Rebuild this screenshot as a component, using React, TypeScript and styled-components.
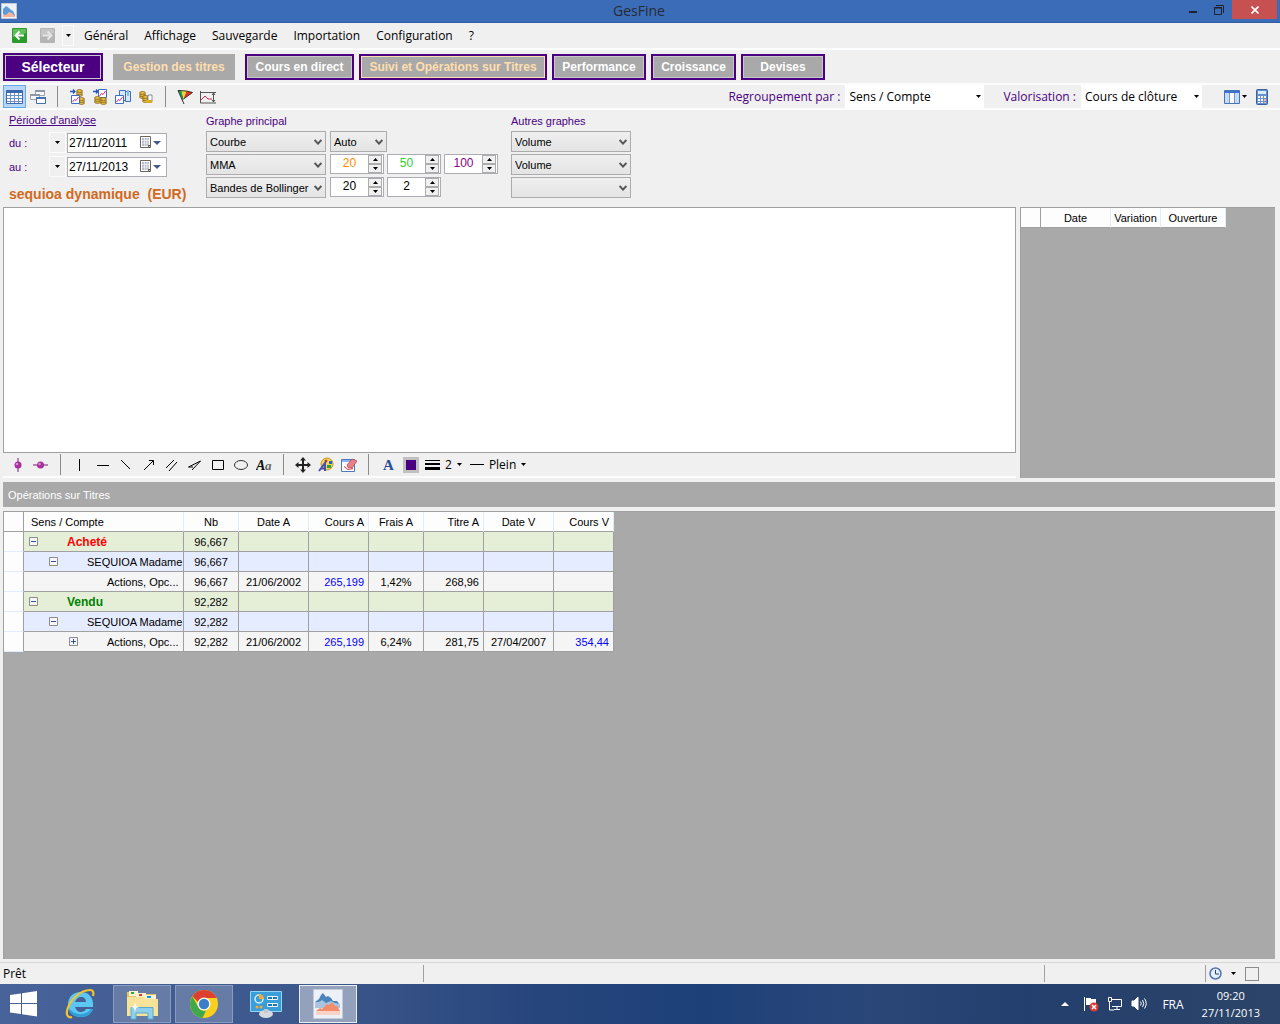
import React from "react";
import styled, { createGlobalStyle, css } from "styled-components";

const ui = `"Open Sans", "Noto Sans", sans-serif`;
const sans = `"Liberation Sans", Arial, sans-serif`;
const indigo = "#4b0082";
const grey = "#a9a9a9";
const line = "#a0a0a0";

const GlobalStyle = createGlobalStyle`
  * { box-sizing: border-box; }
  body { margin: 0; background: #f0f0f0; font: 11px/16px ${sans}; color: #000; }
  button, select, input { font: inherit; color: inherit; margin: 0; border-radius: 0; }
  button { padding: 0; border: 0; background: none; }
  svg { display: block; flex: none; }
`;

const Window = styled.div`
  display: flex;
  flex-direction: column;
  min-height: 100vh;
`;

/* ---------- title bar ---------- */
const TitleBar = styled.header`
  display: grid;
  grid-template-columns: 1fr auto 1fr;
  align-items: center;
  height: 23px;
  padding: 0 3px 0 1px;
  background: #3a6cb8;
  border-bottom: 1px solid #2f5da6;
`;
const WindowTitle = styled.h1`
  margin: 0;
  font: 14px/20px ${ui};
  color: #262a33;
`;
const WindowButtons = styled.div`
  display: flex;
  justify-content: flex-end;
  align-self: start;
`;
const WindowButton = styled.button<{ $close?: boolean }>`
  display: grid;
  place-items: center;
  width: ${p => (p.$close ? 45 : 26)}px;
  height: 19px;
  background: ${p => (p.$close ? "#c75050" : "transparent")};
`;

/* ---------- menus and toolbars ---------- */
const MenuBar = styled.nav`
  display: flex;
  align-items: center;
  height: 27px;
  padding: 0 12px;
  border-bottom: 2px solid #fbfcfe;
  font: 12px/18px ${ui};
`;
const HistoryButtons = styled.div`
  display: flex;
  align-items: center;
  gap: 13px;
  margin-right: 7px;
`;
const DropButton = styled.button<{ $w: number }>`
  display: grid;
  place-items: center;
  width: ${p => p.$w}px;
  height: 21px;
  border: 1px solid #fbfbfb;
`;
const MenuItems = styled.div`
  display: flex;
  gap: 16px;
  margin-left: 10px;
`;
const Tabs = styled.nav`
  display: flex;
  align-items: center;
  gap: 5px;
  height: 35px;
  padding: 0 3px;
  border-bottom: 2px solid #fbfcfe;
`;
const Tab = styled.button<{ $w: number; $kind?: "main" | "flat" | "active" }>`
  width: ${p => p.$w}px;
  height: 26px;
  border: 2px solid ${indigo};
  background: ${grey};
  box-shadow: inset 0 0 0 1px #c8c8c8;
  color: #fff;
  font: bold 12px/16px ${sans};
  white-space: nowrap;
  ${p => p.$kind === "active" && css`
    color: #ffdead;
    box-shadow: inset 0 0 0 1px #ffdead;
  `}
  ${p => p.$kind === "flat" && css`
    margin: 0 5px;
    border-color: ${grey};
    box-shadow: none;
    color: #ffdead;
  `}
  ${p => p.$kind === "main" && css`
    height: 28px;
    background: ${indigo};
    font-size: 14px;
  `}
`;
const ToolBar = styled.div<{ $inset?: number }>`
  display: flex;
  align-items: center;
  height: 25px;
  padding: 0 7px 0 ${p => p.$inset ?? 3}px;
  border-bottom: 2px solid #fbfcfe;
  font: 12px/18px ${ui};
`;
const Tool = styled.button<{ $on?: boolean }>`
  display: grid;
  place-items: center;
  width: 23px;
  height: 23px;
  border: 1px solid ${p => (p.$on ? "#66a7e8" : "transparent")};
  background: ${p => (p.$on ? "#b8d6f5" : "none")};
`;
const WideTool = styled.button<{ $tight?: boolean }>`
  display: flex;
  align-items: center;
  gap: ${p => (p.$tight ? 2 : 5)}px;
  height: 23px;
  padding: 0 ${p => (p.$tight ? 3 : 5)}px 0 3px;
`;
const Divider = styled.i`
  width: 1px;
  height: 21px;
  margin: 0 7px 0 8px;
  background: #8c8c8c;
`;
const ComboGroup = styled.div`
  display: flex;
  align-items: center;
  gap: 19px;
  margin-left: auto;
  margin-right: 19px;
`;
const ComboLabel = styled.label`
  display: flex;
  align-items: center;
  gap: 5px;
  color: ${indigo};
`;

/* ---------- fields ---------- */
const SelectBox = styled.span<{ $w: number }>`
  position: relative;
  display: block;
  width: ${p => p.$w}px;
`;
const BoxSelect = styled.select`
  appearance: none;
  display: block;
  width: 100%;
  height: 21px;
  padding: 0 12px 0 3px;
  border: 1px solid #acacac;
  background: linear-gradient(#efefef, #e4e4e4);
`;
const FlatSelect = styled.select`
  appearance: none;
  display: block;
  width: 100%;
  height: 23px;
  padding: 0 14px 0 4px;
  border: 0;
  background: #fff;
  color: #000;
`;
const SelectMark = styled.span<{ $right: number }>`
  position: absolute;
  top: 0;
  bottom: 0;
  right: ${p => p.$right}px;
  display: flex;
  align-items: center;
  pointer-events: none;
`;
const Spinner = styled.div`
  display: flex;
  width: 54px;
  height: 20px;
  border: 1px solid #abadb3;
  background: #fff;
`;
const SpinInput = styled.input<{ $color: string }>`
  flex: 1;
  min-width: 0;
  padding: 0 0 2px;
  border: 0;
  background: none;
  text-align: center;
  font-size: 12px;
  color: ${p => p.$color};
`;
const SpinButtons = styled.div`
  display: grid;
  grid-template-rows: 1fr 1fr;
  width: 15px;
  padding-right: 1px;
`;
const SpinButton = styled.button`
  display: grid;
  place-items: center;
  border: 1px solid #acacac;
  background: #f0f0f0;
`;

/* ---------- parameters ---------- */
const Parameters = styled.section`
  display: grid;
  grid-template-columns: 197px 305px auto;
  justify-content: start;
  height: 97px;
  padding: 3px 0 0 9px;
  color: ${indigo};
`;
const ParamColumn = styled.div`
  display: flex;
  flex-direction: column;
  gap: 2px;
`;
const DateColumn = styled.div`
  display: flex;
  flex-direction: column;
  gap: 4px;
`;
const GroupTitle = styled.div`
  height: 16px;
`;
const PeriodLink = styled.a`
  line-height: 15px;
  color: ${indigo};
  text-decoration: underline;
`;
const FieldRow = styled.div`
  display: flex;
  align-items: flex-start;
  gap: 4px;
  color: #000;
`;
const SpinGroup = styled.div`
  display: flex;
  gap: 3px;
`;
const DateRow = styled.div`
  display: grid;
  grid-template-columns: 40px 17px 101px;
  align-items: center;
  height: 20px;
`;
const DateField = styled.div`
  display: flex;
  align-items: center;
  height: 20px;
  margin-left: 1px;
  padding-right: 5px;
  border: 1px solid #abadb3;
  background: #fff;
  color: #000;
`;
const DateInput = styled.input`
  flex: 1;
  min-width: 0;
  padding: 0 0 0 1px;
  border: 0;
  background: none;
  font-size: 12px;
`;
const CalendarButton = styled.button`
  display: flex;
  align-items: center;
  gap: 1px;
`;
const Security = styled.h2`
  margin: 6px 0 0;
  font: bold 14px/16px ${sans};
  color: #d2691e;
  white-space: pre;
`;

/* ---------- chart area ---------- */
const ChartArea = styled.main`
  display: flex;
  gap: 4px;
  padding: 0 5px 0 3px;
`;
const ChartColumn = styled.div`
  flex: 1;
  min-width: 0;
`;
const Chart = styled.div`
  height: 246px;
  border: 1px solid ${line};
  background: #fff;
`;
const QuotePanel = styled.aside`
  width: 255px;
  background: ${grey};
  border: solid ${line};
  border-width: 1px 0 0 1px;
`;
const Swatch = styled.span`
  width: 16px;
  height: 16px;
  border: 3px solid #c0c0c0;
  background: ${indigo};
`;

/* ---------- operations ---------- */
const SectionBar = styled.h3`
  height: 25px;
  margin: 4px 5px 4px 3px;
  padding-left: 5px;
  background: ${grey};
  color: #fff;
  font: 11px/26px ${sans};
`;
const GridPanel = styled.section`
  flex: 1;
  margin: 0 5px 3px 3px;
  border: solid ${line};
  border-width: 1px 0 0 1px;
  background: ${grey};
`;
const Table = styled.table`
  table-layout: fixed;
  width: 0;
  border-collapse: separate;
  border-spacing: 0;
`;
type Align = "left" | "center" | "right";
const HeadCell = styled.th<{ $align: Align; $pad?: number }>`
  height: 20px;
  padding: 0 ${p => p.$pad ?? 4}px;
  border-bottom: 1px solid ${line};
  border-right: 1px solid #e3ecfb;
  background: #fdfdfd;
  font-weight: normal;
  text-align: ${p => p.$align};
  white-space: nowrap;
`;
const CornerCell = styled.td<{ $head?: boolean }>`
  height: 20px;
  padding: 0;
  border-bottom: 1px solid ${p => (p.$head ? line : "#e3ecfb")};
  border-right: 1px solid ${line};
  background: #fdfdfd;
`;
const tones = { group: "#e5efd8", account: "#e6ecff", item: "#f5f5f5" };
const Row = styled.tr<{ $tone: keyof typeof tones }>`
  background: ${p => tones[p.$tone]};
`;
const Cell = styled.td<{ $align: Align; $blue?: boolean }>`
  height: 20px;
  padding: 0 4px;
  border-right: 1px solid ${line};
  border-bottom: 1px solid ${line};
  text-align: ${p => p.$align};
  color: ${p => (p.$blue ? "#00f" : "#000")};
  white-space: nowrap;
`;
const TreeCell = styled.td`
  height: 20px;
  padding: 0;
  border-right: 1px solid ${line};
  border-bottom: 1px solid ${line};
`;
const TreeNode = styled.div<{ $level: number; $color?: string }>`
  display: grid;
  grid-template-columns: 9px auto;
  column-gap: 29px;
  justify-content: start;
  align-items: center;
  padding-left: ${p => 5 + p.$level * 20}px;
  color: ${p => p.$color ?? "#000"};
  font-weight: ${p => (p.$color ? "bold" : "normal")};
  font-size: ${p => (p.$color ? 12 : 11)}px;
  white-space: nowrap;
`;

/* ---------- status bar and taskbar ---------- */
const StatusBar = styled.footer`
  display: grid;
  grid-template-columns: 420px 1fr 161px 54px;
  height: 22px;
  padding: 0 21px 0 3px;
  border-top: 1px solid #d7d7d7;
  font: 12px/21px ${ui};
`;
const StatusPane = styled.div`
  display: flex;
  align-items: center;
  height: 17px;
  margin-top: 2px;
  border-left: 1px solid ${line};
`;
const StatusTools = styled(StatusPane)`
  justify-content: space-between;
  padding-left: 3px;
`;
const Square = styled.span`
  width: 14px;
  height: 14px;
  border: 1px solid #8c8c8c;
`;
const TaskBar = styled.footer`
  display: flex;
  align-items: center;
  height: 40px;
  padding-right: 20px;
  background: linear-gradient(90deg, #48639a 0%, #3b5689 26%, #27457d 42%, #1d4079 55%, #2b4779 68%, #233f6d 80%, #2c4468 100%);
  color: #fff;
  font: 11px/17px ${ui};
`;
const TaskButtons = styled.div`
  display: flex;
  gap: 4px;
`;
const TaskButton = styled.button<{ $state?: "start" | "open" | "current" }>`
  display: grid;
  place-items: center;
  width: ${p => (p.$state === "start" ? 47 : 58)}px;
  height: 38px;
  border: 1px solid transparent;
  ${p => p.$state === "open" && css`
    border-color: #8b9bbd;
    background: #667ba6;
  `}
  ${p => p.$state === "current" && css`
    border-color: #e9edf4;
    background: #93a1bd;
  `}
`;
const Tray = styled.div`
  display: flex;
  align-items: center;
  gap: 8px;
  margin-left: auto;
`;
const TrayArrow = styled.button`
  margin-right: 6px;
`;
const Language = styled.span`
  margin: 0 10px 0 7px;
  font-size: 12px;
`;
const Clock = styled.time`
  text-align: center;
`;

/* ---------- drawings ---------- */
const Caret = ({ color = "#000", w = 5 }: { color?: string; w?: number }) => (
  <svg width={w} height={w === 5 ? 3 : 4} viewBox="0 0 8 5" preserveAspectRatio="none" fill={color}><path d="M0 0h8L4 5z" /></svg>
);
const Chevron = () => (
  <svg width="8" height="6" viewBox="0 0 8 6" fill="none" stroke="#555" strokeWidth="2"><path d="M.6 1 4 4.6 7.4 1" /></svg>
);
const Ico = ({ size = 16, children }: { size?: number; children: React.ReactNode }) => (
  <svg width={size} height={size} viewBox="0 0 16 16" fill="none">{children}</svg>
);
const AppLogo = () => (
  <Ico>
    <path fill="#eef2f8" stroke="#c3c9d4" d="M.5.5h15v15H.5z" />
    <path fill="#5b9bdc" d="M2 9V6l3-3 3 2 2 2 2 1 2 4v2H2z" />
    <path fill="#f5b39b" d="m2 11 3 1 3-3 3 1 3 3v1H2z" />
  </Ico>
);
const HistoryArrow = ({ off }: { off?: boolean }) => (
  <svg width="15" height="15" viewBox="0 0 15 15" fill="none">
    <rect width="15" height="15" rx="1" fill={off ? "#b4b4b4" : "#2a9a2c"} />
    <path fill={off ? "#c6c6c6" : "#62bd5d"} d="M1 1h13v4L1 9z" />
    <path stroke={off ? "#e6e6e6" : "#fff"} strokeWidth="1.800" d={off ? "M3 7.500h8.500M7.500 3.500l4 4-4 4" : "M12 7.500H3.500M7.500 3.500l-4 4 4 4"} />
  </svg>
);
const Coins = ({ x, y }: { x: number; y: number }) => (
  <g transform={`translate(${x} ${y})`} stroke="#735109" strokeWidth=".7" fill="#edc348">
    <ellipse cx="3.5" cy="6" rx="3" ry="1.4" /><ellipse cx="3.5" cy="4" rx="3" ry="1.4" /><ellipse cx="3.5" cy="2" rx="3" ry="1.4" />
  </g>
);
const MiniChart = ({ x, y }: { x: number; y: number }) => (
  <g transform={`translate(${x} ${y})`}>
    <path fill="#fff" stroke="#3f6fc4" d="M.5.5h8v8h-8z" /><path stroke="#e0218a" d="m1.500 7 2-2.500 1.500 1 2.500-3.500" />
  </g>
);
const BlueArrow = () => <path stroke="#2458b8" strokeWidth="1.300" d="M1 2.500h5M4 .5l2 2-2 2" />;

const GridIcon = () => (
  <svg width="17" height="16" viewBox="0 0 17 16" fill="none">
    <path fill="#fff" stroke="#3c67ae" d="M.5 1.500h16v13H.5z" /><path fill="#3c67ae" d="M1 2h15v2H1z" />
    <path stroke="#6a8fc8" d="M1 6.500h15M1 9.500h15M1 12.500h15M4.500 4v10M8.500 4v10M12.500 4v10" />
  </svg>
);
const WindowsIcon = () => (
  <Ico>
    <path fill="#f8f8f8" stroke="#9aa2ae" d="M5.500 1.500h9v5h-9z" /><path stroke="#8d97a6" strokeWidth="2" d="M5 2h10" />
    <path fill="#f8f8f8" stroke="#9aa2ae" d="M.5 5.500h9v5h-9z" /><path stroke="#8d97a6" strokeWidth="2" d="M0 6h10" />
    <path fill="#fff" stroke="#476fb4" d="M6.500 8.500h9v6h-9z" /><path stroke="#476fb4" strokeWidth="2" d="M6 9h10" />
  </Ico>
);
const CalculatorIcon = () => (
  <svg width="12" height="16" viewBox="0 0 12 16">
    <rect x=".5" y=".5" width="11" height="15" rx="1" fill="#6791d2" stroke="#3a5fa2" /><path fill="#d8ecff" d="M2 2h8v3H2z" />
    <path fill="#fff" d="M2 7h2v2H2zm3 0h2v2H5zm3 0h2v2H8zM2 10h2v2H2zm3 0h2v2H5z" /><path fill="#f4b6a0" d="M8 10h2v2H8zM8 13h2v1H8z" /><path fill="#fff" d="M2 13h2v1H2zm3 0h2v1H5z" />
  </svg>
);
const ColumnsIcon = () => (
  <svg width="16" height="14" viewBox="0 0 16 14">
    <path fill="#fff" stroke="#4374c2" d="M.5.5h15v13H.5z" /><path fill="#3f72c8" d="M1 1h14v2H1z" />
    <path fill="#c7dbf5" d="M1 3h4v10H1zm10 0h4v10h-4z" /><path stroke="#6f96d2" d="M5.500 3v10M10.500 3v10" />
  </svg>
);
const CalendarIcon = () => (
  <svg width="12" height="13" viewBox="0 0 12 13">
    <path fill="#fff" stroke="#6d6460" d="M.5.5h10v11H.5z" /><path fill="#b6bcc8" d="M2 2h7v8H2z" />
    <path stroke="#fff" strokeWidth=".6" d="M4.500 2v8M6.800 2v8M2 4.500h7M2 7h7" /><path fill="#6d6460" d="M8 12V9h3z" />
  </svg>
);
const topTools: (React.ReactNode | "|")[] = [
  <GridIcon />, <WindowsIcon />, "|",
  <Ico><Coins x={7} y={0} /><Coins x={9} y={8} /><MiniChart x={2} y={6} /><BlueArrow /></Ico>,
  <Ico><MiniChart x={6} y={0} /><Coins x={2} y={7} /><Coins x={8} y={8} /><BlueArrow /></Ico>,
  <Ico><path fill="#d7e8fa" stroke="#3f6fc4" d="M4.500 1.500h6v10h-6zM10.500 2.500h5v10h-5z" /><path fill="#7fbfe0" d="M12 1h2v6h-2z" /><MiniChart x={0} y={6} /></Ico>,
  <Ico><Coins x={1} y={2} /><Coins x={4} y={6} /><path fill="#fff" stroke="#65728c" strokeWidth=".8" d="M10 6h4v7h-4z" /><path fill="#d8a92e" d="M8 11h6v3H8z" /></Ico>, "|",
  <Ico>
    <path fill="#22a045" d="M1 1.500h3.500l2 8L6 12z" /><path fill="#e9dc2c" d="m4.500 1.500 5 .5-3 7.500z" /><path fill="#ed3024" d="m9.500 2 6 1.500L6.500 10z" />
    <path stroke="#222" d="M1 1.500 7 15M1 1.500l8.500.5 6 1.500-9 6.500" strokeWidth=".9" />
  </Ico>,
  <Ico><path stroke="#555" d="M.5 2v12H16M1 3.500h15M13.500 4v9M12 6l1.500-2L15 6M12 11l1.500 2 1.500-2" /><path stroke="#d02848" d="m1 11 4-4 3 3h4" /></Ico>,
];
const drawTools: (React.ReactNode | "|")[] = [
  <Ico><path stroke="#7b1a7b" d="M8 1v14" /><circle cx="8" cy="8" r="3.500" fill="#a8309e" /><circle cx="7" cy="7" r="1.300" fill="#dc8ad6" /></Ico>,
  <Ico><path stroke="#7b1a7b" d="M0 8h15" /><circle cx="7.500" cy="8" r="3.500" fill="#a8309e" /><circle cx="6.500" cy="7" r="1.300" fill="#dc8ad6" /></Ico>,
  "|",
  <Ico><path stroke="#000" d="M7.500 2v12" /></Ico>,
  <Ico><path stroke="#000" d="M2 8.500h12" /></Ico>,
  <Ico><path stroke="#000" d="m3 3 9 9" /></Ico>,
  <Ico><path stroke="#000" d="m3 13 9-9M8 3.500h4.500V8" /></Ico>,
  <Ico><path stroke="#000" d="M2 11 10 3M5 14l8-9" /></Ico>,
  <Ico><path stroke="#000" d="m1.500 10 12-6M5 13 13.500 4M1.500 10h4.500" /></Ico>,
  <Ico><path stroke="#000" d="M2.500 3.500h11v9h-11z" /></Ico>,
  <Ico><ellipse cx="8" cy="8" rx="6.500" ry="4.500" stroke="#333" /></Ico>,
  <Ico>
    <text x="0" y="13" fontFamily="Liberation Serif, serif" fontSize="14" fontWeight="bold" fontStyle="italic" fill="#111">A</text>
    <text x="9" y="13" fontFamily="Liberation Serif, serif" fontSize="13" fontWeight="bold" fontStyle="italic" fill="#666">a</text>
  </Ico>,
  "|",
  <Ico><path stroke="#222" strokeWidth="2" d="M8 2v12M2 8h12" /><path fill="#222" d="m8 0 3 3.500H5zM8 16l3-3.500H5zM0 8l3.500-3v6zM16 8l-3.500-3v6z" /></Ico>,
  <Ico>
    <circle cx="9" cy="7" r="6" fill="#f7d950" stroke="#c2921c" /><circle cx="8" cy="4" r="1.500" fill="#d9322b" /><path fill="#2c62cf" d="M11 4h3v3h-3z" /><path fill="#2c9b3c" d="M9 8h4v3H9z" />
    <path stroke="#4a4fb8" strokeWidth="2" d="m1 14 6-8v8M3 11.500h5" />
  </Ico>,
  <Ico><path fill="#fff" stroke="#4c78bd" d="M.5 2.500h13v12H.5z" /><path fill="#8db2e8" d="M1 3h12v2H1z" /><path fill="#e8808a" stroke="#b53a46" strokeWidth=".7" d="m6 8 5-6 5 2-5 7-4-.5z" /><path stroke="#d33" d="m3 9.500 4 3 5-1" /></Ico>,
  "|",
  <Ico><text x="3" y="13" fontFamily="Liberation Serif, serif" fontSize="15" fontWeight="bold" fill="#2b4c94">A</text></Ico>,
  <Swatch />,
];

const Expander = ({ open }: { open: boolean }) => (
  <svg width="9" height="9" viewBox="0 0 9 9" fill="none">
    <path fill="#f6f6f6" stroke="#8c8c8c" d="M.5.5h8v8h-8z" /><path stroke="#3552a4" d={open ? "M2 4.500h5" : "M2 4.500h5M4.500 2v5"} />
  </svg>
);
const StartIcon = () => (
  <svg width="27" height="26" viewBox="0 0 27 26" fill="#fff"><path d="M0 4 11 2.500V12H0zM12 2.300 27 0v12H12zM0 13h11v10L0 21.500zM12 13h15v12.500l-15-2.300z" /></svg>
);
const BrowserE = () => (
  <svg width="32" height="32" viewBox="0 0 32 32" fill="none">
    <path fill="#5cc7f3" fillRule="evenodd" d="M17 4C9 4 4 9 4 17c0 7 5 12 13 12 6 0 10-3 12-8h-7c-1 2-3 3-5 3-3 0-5-2-6-5h18c1-9-4-15-12-15zm-6 10c1-3 3-5 6-5s5 2 5 5z" />
    <path fill="#2f9fd8" d="M4.500 20c1 6 6 9 12.500 9 6 0 10-3 12-8h-2c-4 6-15 8-22.500-1z" />
    <path stroke="#f5c42d" strokeWidth="2.200" d="M8 29c-3 1-6-1-5-6C5 13 16 2 26 2c3 0 4 2 3 6" />
  </svg>
);
const FolderIcon = () => (
  <svg width="32" height="32" viewBox="0 0 32 32">
    <path fill="#e6c365" d="M1 4h10l1 2h18v22H1z" /><path fill="#fbf3cf" d="M3 3h9v5H3zM10 5h10v5H10zM18 7h12v5H18z" />
    <path fill="#28a745" d="M5 4h3v2H5z" /><path fill="#dc3a2b" d="M13 6h3v2h-3z" /><path fill="#1c90e0" d="M21 8h4v2h-4z" />
    <path fill="#f7e29a" d="M1 9h17l2 2h12v17H1z" /><path fill="#8fd0ec" stroke="#5aa9cf" d="M5 31V19.500h22V31h-5v-6H10v6z" /><path fill="#fff" d="m9 14 1 4 3 1-3 1-1 4-1-4-3-1 3-1z" />
  </svg>
);
const ChromeIcon = () => (
  <svg width="30" height="30" viewBox="0 0 30 30">
    <circle cx="15" cy="15" r="14" fill="#fbcf1d" /><path fill="#dd3f31" d="M15 1a14 14 0 0 1 12.600 8H15a6.500 6.500 0 0 0-6 4L3.400 7.300A14 14 0 0 1 15 1z" />
    <path fill="#3fa84d" d="M3.300 7.500 9 17.500a7 7 0 0 0 8 4L13.500 29A14 14 0 0 1 3.300 7.500z" />
    <circle cx="15" cy="15" r="6.500" fill="#fff" /><circle cx="15" cy="15" r="5.200" fill="#3d7cc9" />
  </svg>
);
const PanelIcon = () => (
  <svg width="32" height="30" viewBox="0 0 32 30">
    <path fill="#3a9fd8" stroke="#8fd6f5" d="M.5 2.500h31v20H.5z" /><circle cx="9" cy="10" r="4" fill="none" stroke="#d4efff" strokeWidth="1.500" /><path fill="#f5a83a" d="M9 10V5a5 5 0 0 1 5 5z" />
    <path fill="#1f76b5" stroke="#eaf7ff" d="M17.500 7.500h10v3h-10zM17.500 14.500h10v3h-10z" /><path fill="#eaf7ff" d="M22 7h1v4h-1zm0 7h1v4h-1z" />
    <circle cx="7" cy="18" r="1.500" fill="#f5a83a" /><circle cx="11" cy="18" r="1.500" fill="#f5a83a" />
    <ellipse cx="16" cy="25" rx="7" ry="4" fill="#d6dade" /><path fill="#c2c8ce" d="M14 20h4v4h-4z" />
  </svg>
);
const MountainIcon = () => (
  <svg width="30" height="30" viewBox="0 0 30 30">
    <path fill="#eef0f7" stroke="#c3cad8" d="M.5.5h29v29H.5z" />
    <path fill="#4a83bd" d="m2 13 4-3 2-4 2-2 3 4 2-1 3 2 2 3 4 0 3 4H2z" /><path fill="#aac4df" d="M2 13h4l3-2 4 3 5-2 4 2 5 1v4H2z" />
    <path fill="#f28d6c" d="m3 22 4-3 2 1 5-5 2 1 3-3 3 4 2 0 3 5z" /><path fill="#f9d3c6" d="M3 22h24v4H3z" />
  </svg>
);
const TrayIcons = () => (
  <>
    <TrayArrow aria-label="Icônes cachées"><svg width="8" height="4" viewBox="0 0 8 4" fill="#fff"><path d="m4 0 4 4H0z" /></svg></TrayArrow>
    <svg width="16" height="16" viewBox="0 0 16 16" fill="none">
      <path stroke="#fff" d="M1.500 1v14" /><path fill="#fff" d="M3 2h5v1h5v7H8V9H3z" /><circle cx="11" cy="11" r="4.500" fill="#d93a35" /><path stroke="#fff" strokeWidth="1.500" d="m9 9 4 4m0-4-4 4" />
    </svg>
    <svg width="16" height="16" viewBox="0 0 16 16" fill="none" stroke="#fff">
      <path d="M5 3.500h9.500v7H5M7 13.500h6M10 10v3M2.500 6v8H7M1.500 1.500h3v4h-3z" />
    </svg>
    <svg width="16" height="16" viewBox="0 0 16 16" fill="none" stroke="#fff">
      <path fill="#fff" d="M1 5h2l4-4v13l-4-4H1z" /><path d="M9.500 5.500q1.500 2 0 4M11.500 4q2.500 3.500 0 7M13.500 2.500q3.500 5 0 10" />
    </svg>
  </>
);

/* ---------- small composites ---------- */
const Tools = ({ items, active }: { items: (React.ReactNode | "|")[]; active?: number }) => (
  <>{items.map((item, i) => (item === "|" ? <Divider key={i} /> : <Tool key={i} $on={i === active}>{item}</Tool>))}</>
);
const Choice = ({ label, value, width = 120 }: { label: string; value: string; width?: number }) => (
  <SelectBox $w={width}>
    <BoxSelect aria-label={label} defaultValue={value}><option>{value}</option></BoxSelect>
    <SelectMark $right={4}><Chevron /></SelectMark>
  </SelectBox>
);
const Combo = ({ label, value, width }: { label: string; value: string; width: number }) => (
  <ComboLabel>
    {label}
    <SelectBox $w={width}>
      <FlatSelect defaultValue={value}><option>{value}</option></FlatSelect>
      <SelectMark $right={3}><Caret /></SelectMark>
    </SelectBox>
  </ComboLabel>
);
const Spin = ({ label, value, color = "#000" }: { label: string; value: string; color?: string }) => (
  <Spinner>
    <SpinInput aria-label={label} defaultValue={value} $color={color} />
    <SpinButtons>
      <SpinButton aria-label="Plus"><svg width="5" height="3" viewBox="0 0 5 3"><path d="M2.500 0 5 3H0z" /></svg></SpinButton>
      <SpinButton aria-label="Moins"><Caret /></SpinButton>
    </SpinButtons>
  </Spinner>
);
const PeriodDate = ({ id, label, value }: { id: string; label: string; value: string }) => (
  <DateRow>
    <label htmlFor={id}>{label}</label>
    <DropButton $w={17} aria-label="Raccourcis"><Caret /></DropButton>
    <DateField>
      <DateInput id={id} defaultValue={value} />
      <CalendarButton aria-label="Calendrier"><CalendarIcon /><Caret color="#44598c" w={8} /></CalendarButton>
    </DateField>
  </DateRow>
);

/* ---------- data ---------- */
const menus = ["Général", "Affichage", "Sauvegarde", "Importation", "Configuration", "?"];
const tabs: { text: string; w: number; kind?: "main" | "flat" | "active" }[] = [
  { text: "Sélecteur", w: 100, kind: "main" },
  { text: "Gestion des titres", w: 122, kind: "flat" },
  { text: "Cours en direct", w: 109 },
  { text: "Suivi et Opérations sur Titres", w: 188, kind: "active" },
  { text: "Performance", w: 94 },
  { text: "Croissance", w: 85 },
  { text: "Devises", w: 84 },
];
const columns: { title: string; w: number; align: Align }[] = [
  { title: "Nb", w: 55, align: "center" },
  { title: "Date A", w: 70, align: "center" },
  { title: "Cours A", w: 60, align: "right" },
  { title: "Frais A", w: 55, align: "center" },
  { title: "Titre A", w: 60, align: "right" },
  { title: "Date V", w: 70, align: "center" },
  { title: "Cours V", w: 60, align: "right" },
];
type Line = { tone: keyof typeof tones; level: number; name: string; color?: string; open?: boolean; cells: string[] };
const lines: Line[] = [
  { tone: "group", level: 0, name: "Acheté", color: "#f00", open: true, cells: ["96,667"] },
  { tone: "account", level: 1, name: "SEQUIOA Madame", open: true, cells: ["96,667"] },
  { tone: "item", level: 2, name: "Actions, Opc...", cells: ["96,667", "21/06/2002", "265,199", "1,42%", "268,96"] },
  { tone: "group", level: 0, name: "Vendu", color: "#008000", open: true, cells: ["92,282"] },
  { tone: "account", level: 1, name: "SEQUIOA Madame", open: true, cells: ["92,282"] },
  { tone: "item", level: 2, name: "Actions, Opc...", open: false, cells: ["92,282", "21/06/2002", "265,199", "6,24%", "281,75", "27/04/2007", "354,44"] },
];

export default function App() {
  return (
    <Window>
      <GlobalStyle />
      <TitleBar>
        <AppLogo />
        <WindowTitle>GesFine</WindowTitle>
        <WindowButtons>
          <WindowButton aria-label="Réduire"><svg width="8" height="8"><path fill="#1d222c" d="M0 5h8v2H0z" /></svg></WindowButton>
          <WindowButton aria-label="Restaurer">
            <svg width="10" height="10" viewBox="0 0 10 10" fill="none" stroke="#1d222c"><path d="M.5 2.500h7v7h-7zM2 .5h7.500V8M0 3h8" /></svg>
          </WindowButton>
          <WindowButton $close aria-label="Fermer">
            <svg width="8" height="8" viewBox="0 0 8 8" stroke="#fff" strokeWidth="1.600"><path d="m.5.5 7 7m0-7-7 7" /></svg>
          </WindowButton>
        </WindowButtons>
      </TitleBar>

      <MenuBar>
        <HistoryButtons>
          <button aria-label="Précédent"><HistoryArrow /></button>
          <button aria-label="Suivant"><HistoryArrow off /></button>
        </HistoryButtons>
        <DropButton $w={12} aria-label="Historique"><Caret /></DropButton>
        <MenuItems>{menus.map(m => <button key={m}>{m}</button>)}</MenuItems>
      </MenuBar>

      <Tabs>{tabs.map(t => <Tab key={t.text} $w={t.w} $kind={t.kind}>{t.text}</Tab>)}</Tabs>

      <ToolBar>
        <Tools items={topTools} active={0} />
        <ComboGroup>
          <Combo label="Regroupement par :" value="Sens / Compte" width={139} />
          <Combo label="Valorisation :" value="Cours de clôture" width={121} />
        </ComboGroup>
        <WideTool $tight aria-label="Colonnes"><ColumnsIcon /><Caret /></WideTool>
        <Tool aria-label="Calculatrice"><CalculatorIcon /></Tool>
      </ToolBar>

      <Parameters>
        <DateColumn>
          <PeriodLink href="#">Période d'analyse</PeriodLink>
          <PeriodDate id="from" label="du :" value="27/11/2011" />
          <PeriodDate id="to" label="au :" value="27/11/2013" />
          <Security>sequioa dynamique  (EUR)</Security>
        </DateColumn>
        <ParamColumn>
          <GroupTitle>Graphe principal</GroupTitle>
          <FieldRow><Choice label="Type" value="Courbe" /><Choice label="Échelle" value="Auto" width={57} /></FieldRow>
          <FieldRow>
            <Choice label="Moyenne" value="MMA" />
            <SpinGroup>
              <Spin label="Moyenne 1" value="20" color="#ff8c00" />
              <Spin label="Moyenne 2" value="50" color="#32cd32" />
              <Spin label="Moyenne 3" value="100" color="#8b008b" />
            </SpinGroup>
          </FieldRow>
          <FieldRow>
            <Choice label="Indicateur" value="Bandes de Bollinger" />
            <SpinGroup><Spin label="Période" value="20" /><Spin label="Écart" value="2" /></SpinGroup>
          </FieldRow>
        </ParamColumn>
        <ParamColumn>
          <GroupTitle>Autres graphes</GroupTitle>
          <FieldRow><Choice label="Graphe 1" value="Volume" /></FieldRow>
          <FieldRow><Choice label="Graphe 2" value="Volume" /></FieldRow>
          <FieldRow><Choice label="Graphe 3" value="" /></FieldRow>
        </ParamColumn>
      </Parameters>

      <ChartArea>
        <ChartColumn>
          <Chart />
          <ToolBar>
            <Tools items={drawTools} />
            <WideTool>
              <svg width="15" height="10"><path d="M0 0h15v1H0zM0 3h15v2H0zM0 7h15v3H0z" /></svg>2<Caret />
            </WideTool>
            <WideTool><svg width="14" height="1"><path d="M0 0h14v1H0z" /></svg>Plein<Caret /></WideTool>
          </ToolBar>
        </ChartColumn>
        <QuotePanel>
          <Table>
            <colgroup><col width={20} /><col width={70} /><col width={50} /><col width={65} /></colgroup>
            <thead>
              <tr>
                <CornerCell $head />
                <HeadCell $align="center">Date</HeadCell>
                <HeadCell $align="center" $pad={0}>Variation</HeadCell>
                <HeadCell $align="center">Ouverture</HeadCell>
              </tr>
            </thead>
          </Table>
        </QuotePanel>
      </ChartArea>

      <SectionBar>Opérations sur Titres</SectionBar>
      <GridPanel>
        <Table>
          <colgroup><col width={20} /><col width={160} />{columns.map(c => <col key={c.title} width={c.w} />)}</colgroup>
          <thead>
            <tr>
              <CornerCell $head />
              <HeadCell $align="left" $pad={7}>Sens / Compte</HeadCell>
              {columns.map(c => <HeadCell key={c.title} $align={c.align}>{c.title}</HeadCell>)}
            </tr>
          </thead>
          <tbody>
            {lines.map((l, i) => (
              <Row key={i} $tone={l.tone}>
                <CornerCell />
                <TreeCell>
                  <TreeNode $level={l.level} $color={l.color}>
                    {l.open === undefined ? <span /> : <Expander open={l.open} />}
                    {l.name}
                  </TreeNode>
                </TreeCell>
                {columns.map((c, n) => (
                  <Cell key={c.title} $align={c.align} $blue={c.title.startsWith("Cours")}>{l.cells[n]}</Cell>
                ))}
              </Row>
            ))}
          </tbody>
        </Table>
      </GridPanel>

      <StatusBar>
        <span>Prêt</span>
        <StatusPane />
        <StatusPane />
        <StatusTools>
          <svg width="13" height="13" viewBox="0 0 13 13" fill="none">
            <circle cx="6.500" cy="6.500" r="5.500" fill="#e6effc" stroke="#5472b0" strokeWidth="1.500" /><path stroke="#2d4377" d="M6.500 3v4H10" />
          </svg>
          <Caret />
          <Square />
        </StatusTools>
      </StatusBar>

      <TaskBar>
        <TaskButtons>
          <TaskButton $state="start" aria-label="Démarrer"><StartIcon /></TaskButton>
          <TaskButton aria-label="Internet"><BrowserE /></TaskButton>
          <TaskButton $state="open" aria-label="Explorateur"><FolderIcon /></TaskButton>
          <TaskButton $state="open" aria-label="Chrome"><ChromeIcon /></TaskButton>
          <TaskButton aria-label="Panneau de configuration"><PanelIcon /></TaskButton>
          <TaskButton $state="current" aria-label="GesFine"><MountainIcon /></TaskButton>
        </TaskButtons>
        <Tray>
          <TrayIcons />
          <Language>FRA</Language>
          <Clock>09:20<br />27/11/2013</Clock>
        </Tray>
      </TaskBar>
    </Window>
  );
}
